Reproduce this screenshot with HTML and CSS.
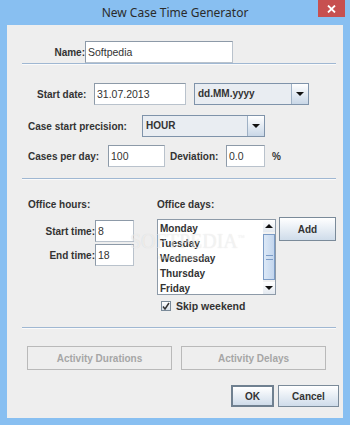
FILE: index.html
```html
<!DOCTYPE html>
<html lang="en">
<head>
<meta charset="UTF-8">
<title>New Case Time Generator</title>
<link rel="stylesheet" href="styles.css">
</head>
<body>

<div class="window">
    <div class="titlebar">
        <span class="title">New Case Time Generator</span>
        <div class="close">
            <svg width="9" height="8" viewBox="0 0 9 8"><path d="M1 0.5 L8 7.5 M8 0.5 L1 7.5" stroke="#fff" stroke-width="1.8"/></svg>
        </div>
    </div>

    <div class="content">
        <!-- Name -->
        <div class="row name-row">
            <span class="lbl name-lbl">Name:</span>
            <div class="field name-field">Softpedia</div>
        </div>

        <div class="sep"></div>

        <!-- Date and precision -->
        <div class="row date-row">
            <span class="lbl date-lbl">Start date:</span>
            <div class="field date-field">31.07.2013</div>
            <div class="combo date-combo">
                <span class="combo-text">dd.MM.yyyy</span>
                <span class="combo-btn"><span class="arrow-down"></span></span>
            </div>
        </div>

        <div class="row prec-row">
            <span class="lbl prec-lbl">Case start precision:</span>
            <div class="combo prec-combo">
                <span class="combo-text">HOUR</span>
                <span class="combo-btn"><span class="arrow-down"></span></span>
            </div>
        </div>

        <div class="row cases-row">
            <span class="lbl cases-lbl">Cases per day:</span>
            <div class="field cases-field">100</div>
            <span class="lbl dev-lbl">Deviation:</span>
            <div class="field dev-field">0.0</div>
            <span class="lbl pct">%</span>
        </div>

        <div class="sep sep-office"></div>

        <!-- Office hours / days -->
        <div class="office">
            <div class="col-hours">
                <span class="lbl">Office hours:</span>
                <div class="time-row start-row">
                    <span class="lbl time-lbl">Start time:</span>
                    <div class="field time-field">8</div>
                </div>
                <div class="time-row end-row">
                    <span class="lbl time-lbl">End time:</span>
                    <div class="field time-field">18</div>
                </div>
            </div>

            <div class="col-days">
                <span class="lbl">Office days:</span>
                <div class="list">
                    <ul class="list-items">
                        <li>Monday</li>
                        <li>Tuesday</li>
                        <li>Wednesday</li>
                        <li>Thursday</li>
                        <li>Friday</li>
                    </ul>
                    <div class="scrollbar">
                        <span class="sb-btn"><span class="arrow-up"></span></span>
                        <span class="sb-track"><span class="sb-thumb"><span class="grip"></span></span></span>
                        <span class="sb-btn"><span class="arrow-down"></span></span>
                    </div>
                </div>
                <div class="check-row">
                    <span class="checkbox">
                        <svg width="8" height="8" viewBox="0 0 8 8"><path d="M1 4.5 L3 7 L7 1" stroke="#333" stroke-width="1.5" fill="none"/></svg>
                    </span>
                    <span class="lbl">Skip weekend</span>
                </div>
            </div>

            <div class="col-add">
                <button class="btn add-btn">Add</button>
            </div>

            <!-- watermark over the list -->
            <div class="watermark">SOFTPEDIA<sup>&trade;</sup><small>www.softpedia.com</small></div>
        </div>

        <div class="sep sep-buttons"></div>

        <div class="row activity-row">
            <button class="btn disabled">Activity Durations</button>
            <button class="btn disabled">Activity Delays</button>
        </div>

        <div class="row ok-row">
            <button class="btn ok-btn">OK</button>
            <button class="btn cancel-btn">Cancel</button>
        </div>
    </div>
</div>

</body>
</html>
```

FILE: styles.css
```css
body {
    margin: 0;
    padding: 0;
    background-color: #88bff1;
    font-family: "Liberation Sans", Arial, sans-serif;
}

.window {
    width: 350px;
    height: 425px;
    background-color: #88bff1;
}

.titlebar {
    height: 25px;
    position: relative;
    display: flex;
    justify-content: center;
}

.title {
    font-family: "Noto Sans", sans-serif;
    font-size: 12px;
    color: #2b2b2b;
    line-height: 26px;
}

.close {
    position: absolute;
    right: 5px;
    top: 0;
    width: 27px;
    height: 17px;
    background-color: #c75050;
    display: flex;
    justify-content: center;
    align-items: center;
}

.content {
    margin-left: 7px;
    width: 336px;
    height: 393px;
    background-color: #eeeeee;
    display: flex;
    flex-direction: column;
}

/* Generic widgets */
.lbl {
    font-size: 10px;
    font-weight: bold;
    color: #333;
    white-space: nowrap;
}

.row {
    display: flex;
    align-items: center;
    height: 22px;
}

.field {
    box-sizing: border-box;
    height: 22px;
    background-color: #fff;
    border: 1px solid #8d9aa8;
    border-right-color: #b9c2cc;
    border-bottom-color: #b9c2cc;
    font-size: 10.5px;
    color: #333;
    line-height: 20px;
    padding-left: 2px;
}

.combo {
    box-sizing: border-box;
    height: 22px;
    display: flex;
    border: 1px solid #7f93aa;
    background-color: #e9edf2;
}

.combo-text {
    flex: 1;
    font-size: 10px;
    font-weight: bold;
    color: #333;
    line-height: 20px;
    padding-left: 3px;
}

.combo-btn {
    width: 16px;
    border-left: 1px solid #9fb1c5;
    background: linear-gradient(#ffffff, #c9d7e7);
    display: flex;
    justify-content: center;
    align-items: center;
}

.arrow-down {
    width: 0;
    height: 0;
    border-left: 4px solid transparent;
    border-right: 4px solid transparent;
    border-top: 4px solid #111;
}

.arrow-up {
    width: 0;
    height: 0;
    border-left: 4px solid transparent;
    border-right: 4px solid transparent;
    border-bottom: 4px solid #111;
}

.sep {
    margin-left: 15px;
    width: 314px;
    height: 1px;
    background-color: #9fb7d2;
    border-bottom: 1px solid #fafafa;
}

.btn {
    box-sizing: border-box;
    font-family: "Liberation Sans", Arial, sans-serif;
    font-size: 10px;
    font-weight: bold;
    color: #333;
    border: 1px solid #7a8a99;
    background: linear-gradient(#ffffff, #cfdcea);
    padding: 0;
}

/* Name */
.name-row {
    margin-top: 16px;
}
.name-lbl {
    width: 78px;
    text-align: right;
}
.name-field {
    width: 148px;
}

.sep:first-of-type {
    margin-top: 7px;
}

/* Date / precision / cases */
.date-row {
    margin-top: 18px;
    padding-left: 30px;
}
.date-lbl {
    width: 57px;
}
.date-field {
    width: 92px;
}
.date-combo {
    margin-left: 8px;
    width: 115px;
}

.prec-row {
    margin-top: 10px;
    padding-left: 21px;
}
.prec-lbl {
    width: 114px;
}
.prec-combo {
    width: 123px;
}

.cases-row {
    margin-top: 8px;
    padding-left: 21px;
}
.cases-lbl {
    width: 80px;
}
.cases-field {
    width: 57px;
}
.dev-lbl {
    margin-left: 5px;
    width: 56px;
}
.dev-field {
    width: 39px;
}
.pct {
    margin-left: 7px;
}

.sep-office {
    margin-top: 11px;
}

/* Office */
.office {
    position: relative;
    margin-top: 19px;
    padding-left: 21px;
    display: flex;
    align-items: flex-start;
}

.office > div > .lbl:first-child {
    display: block;
    height: 12px;
    line-height: 12px;
}

.col-hours {
    width: 129px;
}

.time-row {
    display: flex;
    align-items: center;
}
.start-row {
    margin-top: 9px;
}
.end-row {
    margin-top: 2px;
}
.time-lbl {
    width: 67px;
    text-align: right;
}
.time-field {
    width: 39px;
}

.col-days {
    width: 119px;
}

.list {
    box-sizing: border-box;
    margin-top: 8px;
    height: 76px;
    border: 1px solid #8d9aa8;
    background-color: #fff;
    display: flex;
}

.list-items {
    flex: 1;
    list-style: none;
    margin: 0;
    padding: 1px 0 0 2px;
    overflow: hidden;
}

.list-items li {
    font-size: 10px;
    font-weight: bold;
    color: #333;
    line-height: 15px;
}

.scrollbar {
    width: 12px;
    display: flex;
    flex-direction: column;
    background-color: #f2f2f2;
}

.sb-btn {
    height: 12px;
    display: flex;
    justify-content: center;
    align-items: center;
    background: linear-gradient(#ffffff, #e3e9f0);
}

.sb-track {
    flex: 1;
    display: flex;
    flex-direction: column;
    padding: 2px 0 2px 0;
}

.sb-thumb {
    flex: 1;
    box-sizing: border-box;
    border: 1px solid #7c9cc6;
    background: linear-gradient(90deg, #dce8f6, #c3d6ee);
    display: flex;
    justify-content: center;
    align-items: center;
}

.grip {
    width: 7px;
    height: 3px;
    border-top: 1px solid #7c9cc6;
    border-bottom: 1px solid #7c9cc6;
}

.check-row {
    margin-top: 6px;
    padding-left: 4px;
    display: flex;
    align-items: center;
    height: 10px;
}

.checkbox {
    box-sizing: border-box;
    width: 10px;
    height: 10px;
    border: 1px solid #7a8a99;
    background: linear-gradient(#ffffff, #d6e0ea);
    display: flex;
    justify-content: center;
    align-items: center;
    margin-right: 5px;
}

.check-row .lbl {
    font-size: 10.5px;
}

.col-add {
    margin-left: 3px;
    padding-top: 18px;
}

.add-btn {
    width: 57px;
    height: 24px;
}

/* faint softpedia stamp lying over the list */
.watermark {
    position: absolute;
    left: 123px;
    top: 29px;
    font-family: "Liberation Serif", "Times New Roman", serif;
    font-size: 20px;
    color: rgba(255, 255, 255, 0.55);
    text-shadow: 0 0 1px rgba(0, 0, 0, 0.12);
    line-height: 20px;
    pointer-events: none;
}
.watermark sup {
    font-size: 7px;
}
.watermark small {
    display: block;
    font-family: "Liberation Sans", Arial, sans-serif;
    font-size: 6px;
    padding-left: 28px;
    line-height: 8px;
    margin-top: 2px;
}

.sep-buttons {
    margin-top: 16px;
}

/* Bottom buttons */
.activity-row {
    margin-top: 17px;
    padding-left: 20px;
    height: 24px;
    gap: 9px;
}

.btn.disabled {
    width: 145px;
    height: 24px;
    border-color: #b9b9b9;
    background: #eeeeee;
    color: #a6a6a6;
}

.ok-row {
    margin-top: 15px;
    justify-content: flex-end;
    padding-right: 4px;
    gap: 4px;
}

.ok-btn {
    width: 43px;
    height: 22px;
    border: 2px solid #6f8090;
}

.cancel-btn {
    width: 61px;
    height: 22px;
}
```
